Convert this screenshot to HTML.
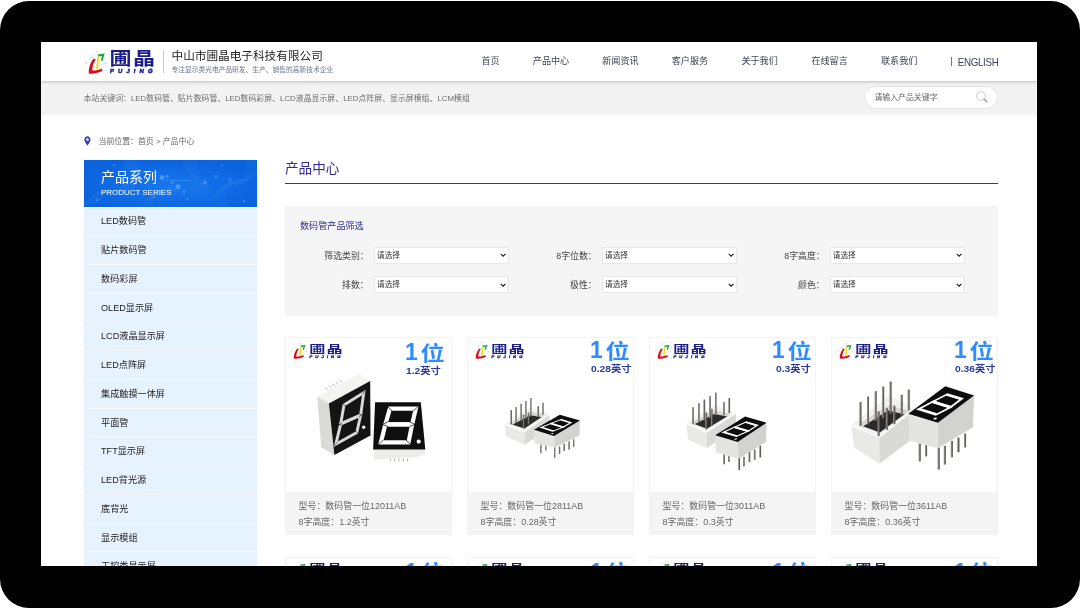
<!DOCTYPE html>
<html lang="zh-CN">
<head>
<meta charset="utf-8">
<title>产品中心 - 中山市圃晶电子科技有限公司</title>
<style>
*{box-sizing:border-box;margin:0;padding:0}
html,body{width:1080px;height:608px;overflow:hidden;background:#fff}
body{font-family:"Liberation Sans","Noto Sans CJK SC",sans-serif;position:relative;color:#333}
#frame{position:absolute;left:0;top:0.5px;width:1079.5px;height:607.5px;background:#000;border-radius:29px}
#screen{position:absolute;left:41px;top:42px;width:996px;height:524px;background:#fff;overflow:hidden;will-change:transform}
.abs{position:absolute;white-space:nowrap;line-height:1}
/* header (coordinates relative to #screen) */
#hdr{position:absolute;left:0;top:0;width:996px;height:38.5px;background:#fff;box-shadow:0 1px 3px rgba(0,0,0,.22);z-index:3}
#kw{position:absolute;left:0;top:38.5px;width:996px;height:34.5px;background:#f3f3f3}
.nav{position:absolute;top:14.4px;font-size:9.1px;color:#3d4256;line-height:10px;white-space:nowrap}
#search{position:absolute;left:822.8px;top:43.6px;width:134.6px;height:23.6px;border:1px solid #e4e4e4;border-radius:11.8px;background:#fff}
.logo{position:absolute;width:70px;height:27px;transform-origin:0 0}
.lg1{position:absolute;left:25px;top:1.4px;font-size:22px;font-weight:bold;color:#1b1f87;line-height:22px;white-space:nowrap;transform:scaleY(0.84);transform-origin:0 0;letter-spacing:1.6px}
.lg2{position:absolute;left:25.4px;top:19.2px;font-size:6px;font-weight:bold;color:#1b1f87;line-height:7px;white-space:nowrap;letter-spacing:4.05px;transform:skewX(-8deg);-webkit-text-stroke:0.5px #1b1f87}
.card .lg1{top:2.5px;transform:scaleY(0.77)}
.card .lg2{top:19.6px}
.card .logo svg{transform:scaleY(1.09);transform-origin:0 2.5px}
/* sidebar */
#sbh{position:absolute;left:43px;top:118.2px;width:173px;height:47.1px;border-bottom:0.9px solid #fff;box-sizing:content-box;z-index:2;background:#0c68dd;overflow:hidden}
.sbi{position:absolute;left:43px;width:173px;height:28.75px;background:#e6f2fe;border-bottom:1px solid #f3f9ff;font-size:9.15px;color:#222;line-height:28.4px;padding-left:17px;white-space:nowrap}
/* main */
#ttl{position:absolute;left:244px;top:119px;font-size:13.6px;color:#30299a;line-height:16px}
#ttlline{position:absolute;left:244px;top:141.1px;width:713px;height:1.4px;background:#3a31a4}
#filter{position:absolute;left:244px;top:163.6px;width:713px;height:110.2px;background:#f5f5f5}
.flab{position:absolute;margin-left:-5.3px;font-size:8.9px;color:#444;line-height:10px;white-space:nowrap;text-align:right;width:80px}
.sel{position:absolute;margin-top:-0.3px;width:135px;height:17.2px;background:#fff;border:1px solid #e8e8e8;font-size:7.6px;color:#333;line-height:15.4px;padding-left:1.8px;white-space:nowrap}
.sel svg{position:absolute;right:2.2px;top:5.4px}
/* cards */
.card{position:absolute;top:295px;width:167px;height:198px;background:#fff;border:1px solid #f3f3f3}
.card .info{position:absolute;left:0;top:154px;width:165px;height:43px;background:#f4f4f4;font-size:8.95px;color:#666;padding:7.2px 0 0 12.5px;line-height:15.5px;white-space:nowrap}
.card .big{position:absolute;top:0.5px;letter-spacing:1.6px;font-size:20.5px;font-weight:bold;color:#2e8cff;line-height:24px;white-space:nowrap;transform:scaleX(1.18);transform-origin:0 0}
.card .one{display:inline-block;font-size:23px;letter-spacing:0;margin-right:0.3px;position:relative;top:-0.4px;transform:scaleX(0.84);transform-origin:0 0}
.card .sm{position:absolute;top:25.6px;font-size:8.7px;font-weight:bold;color:#2b3b9e;line-height:11px;white-space:nowrap;transform:scaleX(1.185);transform-origin:0 0}
.card2{top:514.6px}
</style>
</head>
<body>
<div id="frame"></div>
<div id="screen">
  <div id="hdr">
    <!--HLOGO--><div class="logo" style="left:43.5px;top:6.5px;transform:scale(1.0000,1.0000)">
<svg class="abs" style="left:0;top:0" width="24" height="26" viewBox="0 0 24 26">
<path d="M1.2 14 L12.3 2.6 M9.5 17.8 L20.8 14.3 M5.5 9.5 L16 21" stroke="#b9cdf0" stroke-width="0.45" fill="none"/>
<circle cx="1.2" cy="14" r="0.8" fill="#b9cdf0"/><circle cx="12.3" cy="2.6" r="0.8" fill="#b9cdf0"/><circle cx="20.8" cy="14.3" r="0.8" fill="#b9cdf0"/><circle cx="6.8" cy="8.2" r="0.7" fill="#b9cdf0"/>
<path d="M8.6 9.6 C5.4 13.4 3.4 19.5 3.8 24.4 C8.2 25.4 13.4 24 17.6 21.8 L16.6 19.4 C13.2 21.2 9.8 21.9 7.3 21.4 C7.2 17.6 8.6 13.4 10.8 10.4 Z" fill="#d5101c"/>
<path d="M12.3 7.6 L14 7.8 L13.1 20.6 L11.3 20.2 Z" fill="#f0da00"/>
<path d="M12.8 5.4 L19.6 4.6 L17.6 12 L15.8 11.3 L17.2 6.9 L13.2 7.4 Z" fill="#17a03c"/>
</svg><div class="lg1">圃晶</div><div class="lg2">PUJING</div></div><!--/HLOGO-->
    <div class="abs" style="left:121.5px;top:8px;width:1px;height:23px;background:#c9c9c9"></div>
    <div class="abs" style="left:130.5px;top:6.6px;font-size:11.65px;color:#222;line-height:13px">中山市圃晶电子科技有限公司</div>
    <div class="abs" style="left:130.5px;top:24px;font-size:6.74px;color:#6d7490;line-height:8px">专注显示类光电产品研发、生产、销售的高新技术企业</div>
    <div class="nav" style="left:440.4px">首页</div>
    <div class="nav" style="left:491.8px">产品中心</div>
    <div class="nav" style="left:561.2px">新闻资讯</div>
    <div class="nav" style="left:630.7px">客户服务</div>
    <div class="nav" style="left:700.4px">关于我们</div>
    <div class="nav" style="left:770.4px">在线留言</div>
    <div class="nav" style="left:840px">联系我们</div>
    <div class="nav" style="left:909.3px">|&nbsp;&nbsp;<span style="font-size:9.8px;letter-spacing:-0.33px;display:inline-block;position:relative;top:1.5px;transform:scaleY(1.02)">ENGLISH</span></div>
  </div>
  <div id="kw">
    <div class="abs" style="left:42.6px;top:13px;font-size:7.9px;color:#6e6e6e;line-height:9px">本站关键词：LED数码管、贴片数码管、LED数码彩屏、LCD液晶显示屏、LED点阵屏、显示屏模组、LCM模组</div>
  </div>
  <div id="search">
    <div class="abs" style="left:9.6px;top:6px;font-size:7.9px;color:#686868;line-height:9px">请输入产品关键字</div>
    <svg class="abs" style="left:110px;top:3.6px" width="15" height="15" viewBox="0 0 15 15"><circle cx="6" cy="6" r="4.3" fill="none" stroke="#cdcdcd" stroke-width="1"/><path d="M9.3 9.3 L11.6 11.6" stroke="#b3b3b3" stroke-width="2.1" stroke-linecap="round"/></svg>
  </div>
  <!-- breadcrumb -->
  <svg class="abs" style="left:43.2px;top:94.3px" width="6.9" height="10" viewBox="0 0 8 11" preserveAspectRatio="none"><path d="M4 0.3C1.9 0.3 0.4 1.9 0.4 3.9 0.4 6.4 4 10.6 4 10.6S7.6 6.4 7.6 3.9C7.6 1.9 6.1 0.3 4 0.3Z" fill="#3b4aa6"/><circle cx="4" cy="3.8" r="1.4" fill="#fff"/></svg>
  <div class="abs" style="left:57.5px;top:95.4px;font-size:7.9px;color:#666;line-height:9px">当前位置：首页 &gt; 产品中心</div>

  <!-- sidebar -->
  <div id="sbh">
    <svg class="abs" style="left:0;top:0" width="173" height="47.2" viewBox="0 0 173 46" preserveAspectRatio="none"><defs><filter id="gl" x="-50%" y="-50%" width="200%" height="200%"><feGaussianBlur stdDeviation="0.7"/></filter><radialGradient id="sbg" cx="0.5" cy="0.55" r="0.6"><stop offset="0" stop-color="#1877ee"/><stop offset="1" stop-color="#0a62dc"/></radialGradient></defs><rect width="173" height="46" fill="url(#sbg)"/><g filter="url(#gl)"><polyline points="-2.0,46.0 12.0,32.0 32.0,32.0 42.0,22.0 42.0,-8.0" fill="none" stroke="#5aa2ff" stroke-opacity="0.22" stroke-width="0.7"/><polyline points="0.2,45.5 14.2,31.5 34.2,31.5 44.2,21.5 44.2,-8.5" fill="none" stroke="#5aa2ff" stroke-opacity="0.22" stroke-width="0.7"/><polyline points="2.4,45.0 16.4,31.0 36.4,31.0 46.4,21.0 46.4,-9.0" fill="none" stroke="#5aa2ff" stroke-opacity="0.22" stroke-width="0.7"/><polyline points="4.6,44.5 18.6,30.5 38.6,30.5 48.6,20.5 48.6,-9.5" fill="none" stroke="#5aa2ff" stroke-opacity="0.22" stroke-width="0.7"/><polyline points="6.8,44.0 20.8,30.0 40.8,30.0 50.8,20.0 50.8,-10.0" fill="none" stroke="#5aa2ff" stroke-opacity="0.22" stroke-width="0.7"/><polyline points="9.0,43.5 23.0,29.5 43.0,29.5 53.0,19.5 53.0,-10.5" fill="none" stroke="#5aa2ff" stroke-opacity="0.22" stroke-width="0.7"/><polyline points="11.2,43.0 25.2,29.0 45.2,29.0 55.2,19.0 55.2,-11.0" fill="none" stroke="#5aa2ff" stroke-opacity="0.22" stroke-width="0.7"/><polyline points="100.0,-2.0 100.0,8.0 112.0,20.0 112.0,30.0 98.0,44.0 98.0,64.0" fill="none" stroke="#5aa2ff" stroke-opacity="0.18" stroke-width="0.7"/><polyline points="102.4,-2.0 102.4,9.2 114.4,21.2 114.4,31.2 100.4,45.2 100.4,65.2" fill="none" stroke="#5aa2ff" stroke-opacity="0.18" stroke-width="0.7"/><polyline points="104.8,-2.0 104.8,10.4 116.8,22.4 116.8,32.4 102.8,46.4 102.8,66.4" fill="none" stroke="#5aa2ff" stroke-opacity="0.18" stroke-width="0.7"/><polyline points="107.2,-2.0 107.2,11.6 119.2,23.6 119.2,33.6 105.2,47.6 105.2,67.6" fill="none" stroke="#5aa2ff" stroke-opacity="0.18" stroke-width="0.7"/><polyline points="109.6,-2.0 109.6,12.8 121.6,24.8 121.6,34.8 107.6,48.8 107.6,68.8" fill="none" stroke="#5aa2ff" stroke-opacity="0.18" stroke-width="0.7"/><polyline points="112.0,-2.0 112.0,14.0 124.0,26.0 124.0,36.0 110.0,50.0 110.0,70.0" fill="none" stroke="#5aa2ff" stroke-opacity="0.18" stroke-width="0.7"/><polyline points="128.0,48.0 128.0,36.0 140.0,24.0 154.0,24.0 164.0,14.0 164.0,-6.0" fill="none" stroke="#5aa2ff" stroke-opacity="0.22" stroke-width="0.7"/><polyline points="130.4,48.0 130.4,35.0 142.4,23.0 156.4,23.0 166.4,13.0 166.4,-7.0" fill="none" stroke="#5aa2ff" stroke-opacity="0.22" stroke-width="0.7"/><polyline points="132.8,48.0 132.8,34.0 144.8,22.0 158.8,22.0 168.8,12.0 168.8,-8.0" fill="none" stroke="#5aa2ff" stroke-opacity="0.22" stroke-width="0.7"/><polyline points="135.2,48.0 135.2,33.0 147.2,21.0 161.2,21.0 171.2,11.0 171.2,-9.0" fill="none" stroke="#5aa2ff" stroke-opacity="0.22" stroke-width="0.7"/><polyline points="137.6,48.0 137.6,32.0 149.6,20.0 163.6,20.0 173.6,10.0 173.6,-10.0" fill="none" stroke="#5aa2ff" stroke-opacity="0.22" stroke-width="0.7"/><polyline points="140.0,48.0 140.0,31.0 152.0,19.0 166.0,19.0 176.0,9.0 176.0,-11.0" fill="none" stroke="#5aa2ff" stroke-opacity="0.22" stroke-width="0.7"/><polyline points="40.0,-2.0 40.0,4.0 48.0,12.0 66.0,12.0 74.0,20.0 104.0,20.0" fill="none" stroke="#5aa2ff" stroke-opacity="0.18" stroke-width="0.7"/><polyline points="42.4,-2.0 42.4,4.0 50.4,12.0 68.4,12.0 76.4,20.0 106.4,20.0" fill="none" stroke="#5aa2ff" stroke-opacity="0.18" stroke-width="0.7"/><polyline points="44.8,-2.0 44.8,4.0 52.8,12.0 70.8,12.0 78.8,20.0 108.8,20.0" fill="none" stroke="#5aa2ff" stroke-opacity="0.18" stroke-width="0.7"/><polyline points="47.2,-2.0 47.2,4.0 55.2,12.0 73.2,12.0 81.2,20.0 111.2,20.0" fill="none" stroke="#5aa2ff" stroke-opacity="0.18" stroke-width="0.7"/><polyline points="49.6,-2.0 49.6,4.0 57.6,12.0 75.6,12.0 83.6,20.0 113.6,20.0" fill="none" stroke="#5aa2ff" stroke-opacity="0.18" stroke-width="0.7"/><polyline points="60.0,48.0 60.0,42.0 70.0,32.0 92.0,32.0" fill="none" stroke="#5aa2ff" stroke-opacity="0.2" stroke-width="0.7"/><polyline points="62.2,48.0 62.2,41.0 72.2,31.0 94.2,31.0" fill="none" stroke="#5aa2ff" stroke-opacity="0.2" stroke-width="0.7"/><polyline points="64.4,48.0 64.4,40.0 74.4,30.0 96.4,30.0" fill="none" stroke="#5aa2ff" stroke-opacity="0.2" stroke-width="0.7"/><polyline points="66.6,48.0 66.6,39.0 76.6,29.0 98.6,29.0" fill="none" stroke="#5aa2ff" stroke-opacity="0.2" stroke-width="0.7"/><polyline points="68.8,48.0 68.8,38.0 78.8,28.0 100.8,28.0" fill="none" stroke="#5aa2ff" stroke-opacity="0.2" stroke-width="0.7"/></g><g filter="url(#gl)"><circle cx="78" cy="17" r="2.2" fill="#7fbaff" fill-opacity="0.55"/><circle cx="83" cy="16" r="1.6" fill="#7fbaff" fill-opacity="0.45"/><circle cx="94" cy="26" r="2.4" fill="#7fbaff" fill-opacity="0.5"/><circle cx="100" cy="31" r="1.6" fill="#7fbaff" fill-opacity="0.4"/><circle cx="88" cy="22" r="1.3" fill="#7fbaff" fill-opacity="0.4"/><circle cx="121" cy="22" r="2" fill="#7fbaff" fill-opacity="0.4"/><circle cx="132" cy="16" r="1.5" fill="#7fbaff" fill-opacity="0.35"/><circle cx="146" cy="19" r="1.5" fill="#7fbaff" fill-opacity="0.35"/><circle cx="30" cy="5" r="1.3" fill="#7fbaff" fill-opacity="0.3"/><circle cx="50" cy="24" r="1.4" fill="#7fbaff" fill-opacity="0.3"/><circle cx="13" cy="39" r="1.5" fill="#7fbaff" fill-opacity="0.3"/><circle cx="160" cy="40" r="1.4" fill="#7fbaff" fill-opacity="0.3"/><circle cx="138" cy="5" r="1.2" fill="#7fbaff" fill-opacity="0.3"/><circle cx="70" cy="36" r="1.2" fill="#7fbaff" fill-opacity="0.3"/><circle cx="103" cy="38" r="1.2" fill="#7fbaff" fill-opacity="0.3"/></g></svg>
    <div class="abs" style="left:17px;top:9.5px;font-size:14px;color:#fff;line-height:15px">产品系列</div>
    <div class="abs" style="left:17px;top:28.3px;font-size:7.95px;color:#fff;line-height:9px">PRODUCT SERIES</div>
  </div>
  <div class="abs" style="left:43px;top:164px;width:173px;height:362px;background:#e6f2fe"></div>
  <div class="sbi" style="top:165.40px">LED数码管</div>
  <div class="sbi" style="top:194.15px">贴片数码管</div>
  <div class="sbi" style="top:222.90px">数码彩屏</div>
  <div class="sbi" style="top:251.65px">OLED显示屏</div>
  <div class="sbi" style="top:280.40px">LCD液晶显示屏</div>
  <div class="sbi" style="top:309.15px">LED点阵屏</div>
  <div class="sbi" style="top:337.90px">集成触摸一体屏</div>
  <div class="sbi" style="top:366.65px">平面管</div>
  <div class="sbi" style="top:395.40px">TFT显示屏</div>
  <div class="sbi" style="top:424.15px">LED背光源</div>
  <div class="sbi" style="top:452.90px">底背光</div>
  <div class="sbi" style="top:481.65px">显示模组</div>
  <div class="sbi" style="top:510.40px">工控类显示屏</div>

  <!-- main -->
  <div id="ttl">产品中心</div>
  <div id="ttlline"></div>
  <div id="filter">
    <div class="abs" style="left:15px;top:15px;font-size:9.1px;color:#2f2e8b;line-height:10px">数码管产品筛选</div>
    <div class="flab" style="left:9px;top:45.2px">筛选类别：</div>
    <div class="sel" style="left:89.3px;top:41.7px">请选择<svg width="6.2" height="4.4" viewBox="0 0 7 5"><path d="M0.8 0.9 L3.5 3.7 L6.2 0.9" fill="none" stroke="#222" stroke-width="1.3"/></svg></div>
    <div class="flab" style="left:237px;top:45.2px">8字位数：</div>
    <div class="sel" style="left:317.3px;top:41.7px">请选择<svg width="6.2" height="4.4" viewBox="0 0 7 5"><path d="M0.8 0.9 L3.5 3.7 L6.2 0.9" fill="none" stroke="#222" stroke-width="1.3"/></svg></div>
    <div class="flab" style="left:465px;top:45.2px">8字高度：</div>
    <div class="sel" style="left:545px;top:41.7px">请选择<svg width="6.2" height="4.4" viewBox="0 0 7 5"><path d="M0.8 0.9 L3.5 3.7 L6.2 0.9" fill="none" stroke="#222" stroke-width="1.3"/></svg></div>
    <div class="flab" style="left:9px;top:74.5px">排数：</div>
    <div class="sel" style="left:89.3px;top:71px">请选择<svg width="6.2" height="4.4" viewBox="0 0 7 5"><path d="M0.8 0.9 L3.5 3.7 L6.2 0.9" fill="none" stroke="#222" stroke-width="1.3"/></svg></div>
    <div class="flab" style="left:237px;top:74.5px">极性：</div>
    <div class="sel" style="left:317.3px;top:71px">请选择<svg width="6.2" height="4.4" viewBox="0 0 7 5"><path d="M0.8 0.9 L3.5 3.7 L6.2 0.9" fill="none" stroke="#222" stroke-width="1.3"/></svg></div>
    <div class="flab" style="left:465px;top:74.5px">颜色：</div>
    <div class="sel" style="left:545px;top:71px">请选择<svg width="6.2" height="4.4" viewBox="0 0 7 5"><path d="M0.8 0.9 L3.5 3.7 L6.2 0.9" fill="none" stroke="#222" stroke-width="1.3"/></svg></div>
  </div>
<!--CARDS-->
  <div class="card" style="left:244px">
    <div class="logo" style="left:5.1px;top:3.7px;transform:scale(0.7329,0.6269)">
<svg class="abs" style="left:0;top:0" width="24" height="26" viewBox="0 0 24 26">
<path d="M1.2 14 L12.3 2.6 M9.5 17.8 L20.8 14.3 M5.5 9.5 L16 21" stroke="#b9cdf0" stroke-width="0.45" fill="none"/>
<circle cx="1.2" cy="14" r="0.8" fill="#b9cdf0"/><circle cx="12.3" cy="2.6" r="0.8" fill="#b9cdf0"/><circle cx="20.8" cy="14.3" r="0.8" fill="#b9cdf0"/><circle cx="6.8" cy="8.2" r="0.7" fill="#b9cdf0"/>
<path d="M8.6 9.6 C5.4 13.4 3.4 19.5 3.8 24.4 C8.2 25.4 13.4 24 17.6 21.8 L16.6 19.4 C13.2 21.2 9.8 21.9 7.3 21.4 C7.2 17.6 8.6 13.4 10.8 10.4 Z" fill="#d5101c"/>
<path d="M12.3 7.6 L14 7.8 L13.1 20.6 L11.3 20.2 Z" fill="#f0da00"/>
<path d="M12.8 5.4 L19.6 4.6 L17.6 12 L15.8 11.3 L17.2 6.9 L13.2 7.4 Z" fill="#17a03c"/>
</svg><div class="lg1">圃晶</div><div class="lg2">PUJING</div></div>
    <div class="big" style="left:119px;margin-top:2.2px"><span class="one">1</span>位</div><div class="sm" style="left:120px;margin-top:2.2px">1.2英寸</div>
    <svg class="abs" style="left:0;top:0" width="165" height="154" viewBox="0 0 165 154"><polyline points="38.8,49.5 41.7,51.7" stroke="#b0b0b0" stroke-width="0.8" fill="none"/><polyline points="42.6,47.7 45.5,49.9" stroke="#b0b0b0" stroke-width="0.8" fill="none"/><polyline points="46.2,45.9 49.1,48.1" stroke="#b0b0b0" stroke-width="0.8" fill="none"/><polyline points="49.6,43.9 52.5,46.1" stroke="#b0b0b0" stroke-width="0.8" fill="none"/><polyline points="53.3,41.9 56.1,44.1" stroke="#b0b0b0" stroke-width="0.8" fill="none"/><polygon points="31.2,58.8 72.8,36.0 84.2,42.9 42.9,65.6" fill="#f3f3f1"/><polygon points="31.2,58.8 42.9,65.6 48.4,117.0 35.3,109.4" fill="#dadad8"/><polygon points="42.9,65.6 84.2,42.9 84.5,97.5 48.4,117.0" fill="#141414"/><polygon points="58.0,66.9 77.8,54.6 74.6,77.2 54.7,85.9" fill="none" stroke="#d9d9d9" stroke-width="2.9" stroke-linejoin="miter"/><polygon points="54.7,85.9 74.6,77.2 70.8,94.6 49.8,106.2" fill="none" stroke="#d9d9d9" stroke-width="2.9"/><polyline points="56.7,65.6 59.4,68.0" stroke="#141414" stroke-width="0.6" fill="none"/><polyline points="79.3,52.6 76.4,56.4" stroke="#141414" stroke-width="0.6" fill="none"/><polyline points="53.1,86.8 56.1,84.5" stroke="#141414" stroke-width="0.6" fill="none"/><polyline points="53.1,86.8 55.8,86.8" stroke="#141414" stroke-width="0.6" fill="none"/><polyline points="76.0,76.5 73.1,76.9" stroke="#141414" stroke-width="0.6" fill="none"/><polyline points="76.0,76.5 73.1,79.0" stroke="#141414" stroke-width="0.6" fill="none"/><polyline points="48.2,107.8 51.3,104.2" stroke="#141414" stroke-width="0.6" fill="none"/><polyline points="72.2,95.3 69.3,93.1" stroke="#141414" stroke-width="0.6" fill="none"/><circle cx="77.7" cy="89.2" r="1.7" fill="#f4f4f4"/><polyline points="104.4,120.6 104.4,123.5" stroke="#999" stroke-width="0.8" fill="none"/><polyline points="108.6,120.6 108.6,123.5" stroke="#999" stroke-width="0.8" fill="none"/><polyline points="112.9,120.6 112.9,123.5" stroke="#999" stroke-width="0.8" fill="none"/><polyline points="117.3,120.6 117.3,123.5" stroke="#999" stroke-width="0.8" fill="none"/><polyline points="121.6,120.6 121.6,123.5" stroke="#999" stroke-width="0.8" fill="none"/><polygon points="87.3,111.2 139.2,111.2 139.2,116.3 129.8,119.2 88.2,121.5" fill="#ececea"/><polygon points="89.1,64.2 134.8,64.2 139.3,111.6 87.1,111.6" fill="#0f0f0f"/><polygon points="103.9,70.7 129.8,70.7 126.1,86.3 99.4,86.3" fill="none" stroke="#fff" stroke-width="4.2"/><polygon points="99.4,86.3 126.1,86.3 122.5,104.4 94.9,104.4" fill="none" stroke="#fff" stroke-width="4.2"/><polyline points="101.2,68.0 106.4,73.2" stroke="#0f0f0f" stroke-width="0.75" fill="none"/><polyline points="132.5,68.0 127.2,73.2" stroke="#0f0f0f" stroke-width="0.75" fill="none"/><polyline points="96.5,86.3 101.9,83.9" stroke="#0f0f0f" stroke-width="0.75" fill="none"/><polyline points="96.5,86.3 101.9,88.6" stroke="#0f0f0f" stroke-width="0.75" fill="none"/><polyline points="129.0,86.3 123.6,83.9" stroke="#0f0f0f" stroke-width="0.75" fill="none"/><polyline points="129.0,86.3 123.6,88.6" stroke="#0f0f0f" stroke-width="0.75" fill="none"/><polyline points="92.1,107.1 97.4,101.8" stroke="#0f0f0f" stroke-width="0.75" fill="none"/><polyline points="125.2,107.1 120.0,101.8" stroke="#0f0f0f" stroke-width="0.75" fill="none"/><circle cx="132.7" cy="103.6" r="2.1" fill="#fff"/></svg>
    <div class="info">型号：数码管一位12011AB<br>8字高度：1.2英寸</div>
  </div>
  <div class="card" style="left:426px">
    <div class="logo" style="left:5.1px;top:3.7px;transform:scale(0.7329,0.6269)">
<svg class="abs" style="left:0;top:0" width="24" height="26" viewBox="0 0 24 26">
<path d="M1.2 14 L12.3 2.6 M9.5 17.8 L20.8 14.3 M5.5 9.5 L16 21" stroke="#b9cdf0" stroke-width="0.45" fill="none"/>
<circle cx="1.2" cy="14" r="0.8" fill="#b9cdf0"/><circle cx="12.3" cy="2.6" r="0.8" fill="#b9cdf0"/><circle cx="20.8" cy="14.3" r="0.8" fill="#b9cdf0"/><circle cx="6.8" cy="8.2" r="0.7" fill="#b9cdf0"/>
<path d="M8.6 9.6 C5.4 13.4 3.4 19.5 3.8 24.4 C8.2 25.4 13.4 24 17.6 21.8 L16.6 19.4 C13.2 21.2 9.8 21.9 7.3 21.4 C7.2 17.6 8.6 13.4 10.8 10.4 Z" fill="#d5101c"/>
<path d="M12.3 7.6 L14 7.8 L13.1 20.6 L11.3 20.2 Z" fill="#f0da00"/>
<path d="M12.8 5.4 L19.6 4.6 L17.6 12 L15.8 11.3 L17.2 6.9 L13.2 7.4 Z" fill="#17a03c"/>
</svg><div class="lg1">圃晶</div><div class="lg2">PUJING</div></div>
    <div class="big" style="left:121.8px;margin-top:0px"><span class="one">1</span>位</div><div class="sm" style="left:122.8px;margin-top:0px">0.28英寸</div>
    <svg class="abs" style="left:0;top:0" width="165" height="154" viewBox="0 0 165 154"><polygon points="36.6,86.0 62.2,69.3 81.7,75.9 56.2,93.7" fill="#f1f1ef"/><clipPath id="c500"><polygon points="41.0,85.4 62.2,74.1 77.5,76.6 56.4,90.6"/></clipPath><polygon points="41.0,85.4 62.2,74.1 77.5,76.6 56.4,90.6" fill="#d6d6d4"/><polygon points="41.0,88.5 62.2,77.2 77.5,79.7 56.4,93.7" fill="#2b2b2b" clip-path="url(#c500)"/><rect x="42.6" y="72.1" width="1.35" height="14.4" rx="0.45" fill="#625f5b"/><rect x="42.6" y="72.1" width="0.41" height="14.4" fill="#a9a7a3"/><rect x="47.4" y="69.0" width="1.35" height="16.3" rx="0.45" fill="#625f5b"/><rect x="47.4" y="69.0" width="0.41" height="16.3" fill="#a9a7a3"/><rect x="52.4" y="65.8" width="1.35" height="17.3" rx="0.45" fill="#625f5b"/><rect x="52.4" y="65.8" width="0.41" height="17.3" fill="#a9a7a3"/><rect x="57.2" y="62.9" width="1.35" height="17.8" rx="0.45" fill="#625f5b"/><rect x="57.2" y="62.9" width="0.41" height="17.8" fill="#a9a7a3"/><rect x="62.2" y="60.1" width="1.35" height="18.4" rx="0.45" fill="#625f5b"/><rect x="62.2" y="60.1" width="0.41" height="18.4" fill="#a9a7a3"/><rect x="69.6" y="68.1" width="1.35" height="10.9" rx="0.45" fill="#625f5b"/><rect x="69.6" y="68.1" width="0.41" height="10.9" fill="#a9a7a3"/><rect x="74.3" y="64.7" width="1.35" height="12.1" rx="0.45" fill="#625f5b"/><rect x="74.3" y="64.7" width="0.41" height="12.1" fill="#a9a7a3"/><polygon points="36.6,86.0 56.2,93.7 56.7,106.7 38.3,98.6" fill="#e9e9e7"/><polygon points="56.2,93.7 81.7,75.9 81.5,90.0 56.7,106.7" fill="#d9d9d7"/><polyline points="36.6,86.0 56.2,93.7 81.7,75.9" fill="none" stroke="#fbfbfb" stroke-width="1.6"/><rect x="54.9" y="76.7" width="1.35" height="13.8" rx="0.45" fill="#625f5b"/><rect x="54.9" y="76.7" width="0.41" height="13.8" fill="#a9a7a3"/><rect x="59.9" y="74.4" width="1.35" height="12.1" rx="0.45" fill="#625f5b"/><rect x="59.9" y="74.4" width="0.41" height="12.1" fill="#a9a7a3"/><rect x="72.2" y="106.1" width="1.35" height="9.2" rx="0.45" fill="#5e5b57"/><rect x="72.2" y="106.1" width="0.41" height="9.2" fill="#a9a7a3"/><rect x="77.1" y="107.2" width="1.35" height="5.2" rx="0.45" fill="#5e5b57"/><rect x="77.1" y="107.2" width="0.41" height="5.2" fill="#a9a7a3"/><rect x="86.0" y="109.0" width="1.35" height="10.9" rx="0.45" fill="#5e5b57"/><rect x="86.0" y="109.0" width="0.41" height="10.9" fill="#a9a7a3"/><rect x="90.9" y="108.4" width="1.35" height="7.5" rx="0.45" fill="#5e5b57"/><rect x="90.9" y="108.4" width="0.41" height="7.5" fill="#a9a7a3"/><rect x="95.5" y="105.5" width="1.35" height="7.5" rx="0.45" fill="#5e5b57"/><rect x="95.5" y="105.5" width="0.41" height="7.5" fill="#a9a7a3"/><rect x="100.4" y="103.2" width="1.35" height="8.6" rx="0.45" fill="#5e5b57"/><rect x="100.4" y="103.2" width="0.41" height="8.6" fill="#a9a7a3"/><rect x="105.0" y="100.9" width="1.35" height="8.1" rx="0.45" fill="#5e5b57"/><rect x="105.0" y="100.9" width="0.41" height="8.1" fill="#a9a7a3"/><polygon points="66.0,91.7 86.1,98.0 87.0,109.5 66.5,105.5" fill="#e4e4e2"/><polygon points="86.1,98.0 112.0,82.5 111.4,97.5 87.0,109.5" fill="#d2d2d0"/><polygon points="66.0,91.7 91.8,76.7 112.0,82.5 86.1,98.0" fill="#0d0d0d"/><g transform="matrix(20.14 6.33 -25.89 14.96 91.85 76.74)" fill="none" stroke="#fff" stroke-width="0.072"><polygon points="0.3,0.2 0.8,0.2 0.8,0.5 0.2,0.5"/><polygon points="0.2,0.5 0.8,0.5 0.7,0.8 0.1,0.8"/><ellipse cx="0.8" cy="0.915" rx="0.042" ry="0.033600000000000005" fill="#fff" stroke="none"/></g></svg>
    <div class="info">型号：数码管一位2811AB<br>8字高度：0.28英寸</div>
  </div>
  <div class="card" style="left:608px">
    <div class="logo" style="left:5.1px;top:3.7px;transform:scale(0.7329,0.6269)">
<svg class="abs" style="left:0;top:0" width="24" height="26" viewBox="0 0 24 26">
<path d="M1.2 14 L12.3 2.6 M9.5 17.8 L20.8 14.3 M5.5 9.5 L16 21" stroke="#b9cdf0" stroke-width="0.45" fill="none"/>
<circle cx="1.2" cy="14" r="0.8" fill="#b9cdf0"/><circle cx="12.3" cy="2.6" r="0.8" fill="#b9cdf0"/><circle cx="20.8" cy="14.3" r="0.8" fill="#b9cdf0"/><circle cx="6.8" cy="8.2" r="0.7" fill="#b9cdf0"/>
<path d="M8.6 9.6 C5.4 13.4 3.4 19.5 3.8 24.4 C8.2 25.4 13.4 24 17.6 21.8 L16.6 19.4 C13.2 21.2 9.8 21.9 7.3 21.4 C7.2 17.6 8.6 13.4 10.8 10.4 Z" fill="#d5101c"/>
<path d="M12.3 7.6 L14 7.8 L13.1 20.6 L11.3 20.2 Z" fill="#f0da00"/>
<path d="M12.8 5.4 L19.6 4.6 L17.6 12 L15.8 11.3 L17.2 6.9 L13.2 7.4 Z" fill="#17a03c"/>
</svg><div class="lg1">圃晶</div><div class="lg2">PUJING</div></div>
    <div class="big" style="left:121.5px;margin-top:0px"><span class="one">1</span>位</div><div class="sm" style="left:126px;margin-top:0px">0.3英寸</div>
    <svg class="abs" style="left:0;top:0" width="165" height="154" viewBox="0 0 165 154"><polygon points="36.2,85.2 64.8,67.0 85.9,74.8 56.6,94.1" fill="#f1f1ef"/><clipPath id="c680"><polygon points="41.1,84.7 64.3,72.5 81.1,75.9 56.9,90.7"/></clipPath><polygon points="41.1,84.7 64.3,72.5 81.1,75.9 56.9,90.7" fill="#d6d6d4"/><polygon points="41.1,88.1 64.3,75.9 81.1,79.3 56.9,94.1" fill="#2b2b2b" clip-path="url(#c680)"/><rect x="42.2" y="69.2" width="1.6" height="17.0" rx="0.53" fill="#625f5b"/><rect x="42.2" y="69.2" width="0.48" height="17.0" fill="#a9a7a3"/><rect x="48.1" y="65.1" width="1.6" height="19.7" rx="0.53" fill="#625f5b"/><rect x="48.1" y="65.1" width="0.48" height="19.7" fill="#a9a7a3"/><rect x="53.6" y="61.4" width="1.6" height="21.2" rx="0.53" fill="#625f5b"/><rect x="53.6" y="61.4" width="0.48" height="21.2" fill="#a9a7a3"/><rect x="59.2" y="58.1" width="1.6" height="22.2" rx="0.53" fill="#625f5b"/><rect x="59.2" y="58.1" width="0.48" height="22.2" fill="#a9a7a3"/><rect x="65.0" y="54.4" width="1.6" height="22.9" rx="0.53" fill="#625f5b"/><rect x="65.0" y="54.4" width="0.48" height="22.9" fill="#a9a7a3"/><rect x="73.1" y="64.0" width="1.6" height="13.3" rx="0.53" fill="#625f5b"/><rect x="73.1" y="64.0" width="0.48" height="13.3" fill="#a9a7a3"/><rect x="78.5" y="60.0" width="1.6" height="15.1" rx="0.53" fill="#625f5b"/><rect x="78.5" y="60.0" width="0.48" height="15.1" fill="#a9a7a3"/><polygon points="36.2,85.2 56.6,94.1 56.9,109.9 38.1,101.7" fill="#e9e9e7"/><polygon points="56.6,94.1 85.9,74.8 85.9,91.4 56.9,109.9" fill="#d9d9d7"/><polyline points="36.2,85.2 56.6,94.1 85.9,74.8" fill="none" stroke="#fbfbfb" stroke-width="1.6"/><rect x="55.5" y="74.4" width="1.6" height="17.0" rx="0.53" fill="#625f5b"/><rect x="55.5" y="74.4" width="0.48" height="17.0" fill="#a9a7a3"/><rect x="61.0" y="70.7" width="1.6" height="17.0" rx="0.53" fill="#625f5b"/><rect x="61.0" y="70.7" width="0.48" height="17.0" fill="#a9a7a3"/><rect x="73.3" y="115.1" width="1.6" height="11.1" rx="0.53" fill="#5e5b57"/><rect x="73.3" y="115.1" width="0.48" height="11.1" fill="#a9a7a3"/><rect x="78.0" y="116.5" width="1.6" height="7.4" rx="0.53" fill="#5e5b57"/><rect x="78.0" y="116.5" width="0.48" height="7.4" fill="#a9a7a3"/><rect x="88.4" y="119.5" width="1.6" height="12.6" rx="0.53" fill="#5e5b57"/><rect x="88.4" y="119.5" width="0.48" height="12.6" fill="#a9a7a3"/><rect x="93.1" y="118.8" width="1.6" height="9.6" rx="0.53" fill="#5e5b57"/><rect x="93.1" y="118.8" width="0.48" height="9.6" fill="#a9a7a3"/><rect x="98.7" y="113.6" width="1.6" height="10.4" rx="0.53" fill="#5e5b57"/><rect x="98.7" y="113.6" width="0.48" height="10.4" fill="#a9a7a3"/><rect x="103.9" y="111.4" width="1.6" height="10.4" rx="0.53" fill="#5e5b57"/><rect x="103.9" y="111.4" width="0.48" height="10.4" fill="#a9a7a3"/><rect x="109.5" y="107.7" width="1.6" height="11.8" rx="0.53" fill="#5e5b57"/><rect x="109.5" y="107.7" width="0.48" height="11.8" fill="#a9a7a3"/><polygon points="65.2,97.3 87.7,104.0 88.4,121.0 65.8,114.3" fill="#e4e4e2"/><polygon points="87.7,104.0 116.6,84.7 116.1,104.0 88.4,121.0" fill="#d2d2d0"/><polygon points="65.2,97.3 95.1,78.4 116.6,84.7 87.7,104.0" fill="#0d0d0d"/><g transform="matrix(22.49 6.66 -29.89 18.94 95.11 78.37)" fill="none" stroke="#fff" stroke-width="0.072"><polygon points="0.3,0.2 0.8,0.2 0.8,0.5 0.2,0.5"/><polygon points="0.2,0.5 0.8,0.5 0.7,0.8 0.1,0.8"/><ellipse cx="0.8" cy="0.915" rx="0.042" ry="0.033600000000000005" fill="#fff" stroke="none"/></g></svg>
    <div class="info">型号：数码管一位3011AB<br>8字高度：0.3英寸</div>
  </div>
  <div class="card" style="left:790px">
    <div class="logo" style="left:5.1px;top:3.7px;transform:scale(0.7329,0.6269)">
<svg class="abs" style="left:0;top:0" width="24" height="26" viewBox="0 0 24 26">
<path d="M1.2 14 L12.3 2.6 M9.5 17.8 L20.8 14.3 M5.5 9.5 L16 21" stroke="#b9cdf0" stroke-width="0.45" fill="none"/>
<circle cx="1.2" cy="14" r="0.8" fill="#b9cdf0"/><circle cx="12.3" cy="2.6" r="0.8" fill="#b9cdf0"/><circle cx="20.8" cy="14.3" r="0.8" fill="#b9cdf0"/><circle cx="6.8" cy="8.2" r="0.7" fill="#b9cdf0"/>
<path d="M8.6 9.6 C5.4 13.4 3.4 19.5 3.8 24.4 C8.2 25.4 13.4 24 17.6 21.8 L16.6 19.4 C13.2 21.2 9.8 21.9 7.3 21.4 C7.2 17.6 8.6 13.4 10.8 10.4 Z" fill="#d5101c"/>
<path d="M12.3 7.6 L14 7.8 L13.1 20.6 L11.3 20.2 Z" fill="#f0da00"/>
<path d="M12.8 5.4 L19.6 4.6 L17.6 12 L15.8 11.3 L17.2 6.9 L13.2 7.4 Z" fill="#17a03c"/>
</svg><div class="lg1">圃晶</div><div class="lg2">PUJING</div></div>
    <div class="big" style="left:122px;margin-top:0px"><span class="one">1</span>位</div><div class="sm" style="left:122.5px;margin-top:0px">0.36英寸</div>
    <svg class="abs" style="left:0;top:0" width="165" height="154" viewBox="0 0 165 154"><polygon points="19.3,87.2 56.6,57.6 82.9,70.7 47.2,99.2" fill="#f1f1ef"/><clipPath id="c845"><polygon points="26.2,86.4 56.1,67.4 77.5,72.4 47.9,94.6"/></clipPath><polygon points="26.2,86.4 56.1,67.4 77.5,72.4 47.9,94.6" fill="#d6d6d4"/><polygon points="26.2,91.4 56.1,72.5 77.5,77.5 47.9,99.7" fill="#2b2b2b" clip-path="url(#c845)"/><rect x="27.6" y="64.1" width="2.0" height="23.9" rx="0.67" fill="#625f5b"/><rect x="27.6" y="64.1" width="0.60" height="23.9" fill="#a9a7a3"/><rect x="35.0" y="58.4" width="2.0" height="28.0" rx="0.67" fill="#625f5b"/><rect x="35.0" y="58.4" width="0.60" height="28.0" fill="#a9a7a3"/><rect x="42.8" y="53.1" width="2.0" height="29.9" rx="0.67" fill="#625f5b"/><rect x="42.8" y="53.1" width="0.60" height="29.9" fill="#a9a7a3"/><rect x="50.2" y="48.5" width="2.0" height="31.3" rx="0.67" fill="#625f5b"/><rect x="50.2" y="48.5" width="0.60" height="31.3" fill="#a9a7a3"/><rect x="57.7" y="43.6" width="2.0" height="32.1" rx="0.67" fill="#625f5b"/><rect x="57.7" y="43.6" width="0.60" height="32.1" fill="#a9a7a3"/><rect x="68.8" y="56.7" width="2.0" height="20.6" rx="0.67" fill="#625f5b"/><rect x="68.8" y="56.7" width="0.60" height="20.6" fill="#a9a7a3"/><rect x="75.8" y="51.5" width="2.0" height="20.9" rx="0.67" fill="#625f5b"/><rect x="75.8" y="51.5" width="0.60" height="20.9" fill="#a9a7a3"/><polygon points="19.3,87.2 47.2,99.2 47.5,125.8 22.0,109.4" fill="#e9e9e7"/><polygon points="47.2,99.2 82.9,70.7 82.1,99.5 47.5,125.8" fill="#d9d9d7"/><polyline points="19.3,87.2 47.2,99.2 82.9,70.7" fill="none" stroke="#fbfbfb" stroke-width="1.6"/><rect x="45.7" y="73.2" width="2.0" height="25.0" rx="0.67" fill="#625f5b"/><rect x="45.7" y="73.2" width="0.60" height="25.0" fill="#a9a7a3"/><rect x="53.9" y="69.9" width="2.0" height="22.2" rx="0.67" fill="#625f5b"/><rect x="53.9" y="69.9" width="0.60" height="22.2" fill="#a9a7a3"/><rect x="61.4" y="67.4" width="2.0" height="18.9" rx="0.67" fill="#625f5b"/><rect x="61.4" y="67.4" width="0.60" height="18.9" fill="#a9a7a3"/><rect x="86.8" y="105.3" width="2.0" height="18.1" rx="0.67" fill="#5e5b57"/><rect x="86.8" y="105.3" width="0.60" height="18.1" fill="#a9a7a3"/><rect x="93.1" y="106.9" width="2.0" height="11.5" rx="0.67" fill="#5e5b57"/><rect x="93.1" y="106.9" width="0.60" height="11.5" fill="#a9a7a3"/><rect x="105.8" y="109.4" width="2.0" height="22.2" rx="0.67" fill="#5e5b57"/><rect x="105.8" y="109.4" width="0.60" height="22.2" fill="#a9a7a3"/><rect x="111.9" y="107.7" width="2.0" height="18.9" rx="0.67" fill="#5e5b57"/><rect x="111.9" y="107.7" width="0.60" height="18.9" fill="#a9a7a3"/><rect x="118.9" y="102.8" width="2.0" height="16.5" rx="0.67" fill="#5e5b57"/><rect x="118.9" y="102.8" width="0.60" height="16.5" fill="#a9a7a3"/><rect x="125.5" y="99.5" width="2.0" height="14.8" rx="0.67" fill="#5e5b57"/><rect x="125.5" y="99.5" width="0.60" height="14.8" fill="#a9a7a3"/><rect x="132.1" y="95.4" width="2.0" height="14.0" rx="0.67" fill="#5e5b57"/><rect x="132.1" y="95.4" width="0.60" height="14.0" fill="#a9a7a3"/><polygon points="76.3,75.7 105.9,84.7 105.9,110.2 77.2,102.8" fill="#e4e4e2"/><polygon points="105.9,84.7 142.1,57.6 141.0,89.3 105.9,110.2" fill="#d2d2d0"/><polygon points="76.3,75.7 113.3,48.2 142.1,57.6 105.9,84.7" fill="#0d0d0d"/><g transform="matrix(29.61 9.05 -37.01 27.47 113.35 48.19)" fill="none" stroke="#fff" stroke-width="0.072"><polygon points="0.3,0.2 0.8,0.2 0.8,0.5 0.2,0.5"/><polygon points="0.2,0.5 0.8,0.5 0.7,0.8 0.1,0.8"/><ellipse cx="0.8" cy="0.915" rx="0.042" ry="0.033600000000000005" fill="#fff" stroke="none"/></g></svg>
    <div class="info">型号：数码管一位3611AB<br>8字高度：0.36英寸</div>
  </div>
  <div class="card card2" style="left:244px">
    <div class="logo" style="left:5.1px;top:3.7px;transform:scale(0.7329,0.6269)">
<svg class="abs" style="left:0;top:0" width="24" height="26" viewBox="0 0 24 26">
<path d="M1.2 14 L12.3 2.6 M9.5 17.8 L20.8 14.3 M5.5 9.5 L16 21" stroke="#b9cdf0" stroke-width="0.45" fill="none"/>
<circle cx="1.2" cy="14" r="0.8" fill="#b9cdf0"/><circle cx="12.3" cy="2.6" r="0.8" fill="#b9cdf0"/><circle cx="20.8" cy="14.3" r="0.8" fill="#b9cdf0"/><circle cx="6.8" cy="8.2" r="0.7" fill="#b9cdf0"/>
<path d="M8.6 9.6 C5.4 13.4 3.4 19.5 3.8 24.4 C8.2 25.4 13.4 24 17.6 21.8 L16.6 19.4 C13.2 21.2 9.8 21.9 7.3 21.4 C7.2 17.6 8.6 13.4 10.8 10.4 Z" fill="#d5101c"/>
<path d="M12.3 7.6 L14 7.8 L13.1 20.6 L11.3 20.2 Z" fill="#f0da00"/>
<path d="M12.8 5.4 L19.6 4.6 L17.6 12 L15.8 11.3 L17.2 6.9 L13.2 7.4 Z" fill="#17a03c"/>
</svg><div class="lg1">圃晶</div><div class="lg2">PUJING</div></div>
    <div class="big" style="left:119px;margin-top:2.1px"><span class="one">1</span>位</div>
  </div>
  <div class="card card2" style="left:426px">
    <div class="logo" style="left:5.1px;top:3.7px;transform:scale(0.7329,0.6269)">
<svg class="abs" style="left:0;top:0" width="24" height="26" viewBox="0 0 24 26">
<path d="M1.2 14 L12.3 2.6 M9.5 17.8 L20.8 14.3 M5.5 9.5 L16 21" stroke="#b9cdf0" stroke-width="0.45" fill="none"/>
<circle cx="1.2" cy="14" r="0.8" fill="#b9cdf0"/><circle cx="12.3" cy="2.6" r="0.8" fill="#b9cdf0"/><circle cx="20.8" cy="14.3" r="0.8" fill="#b9cdf0"/><circle cx="6.8" cy="8.2" r="0.7" fill="#b9cdf0"/>
<path d="M8.6 9.6 C5.4 13.4 3.4 19.5 3.8 24.4 C8.2 25.4 13.4 24 17.6 21.8 L16.6 19.4 C13.2 21.2 9.8 21.9 7.3 21.4 C7.2 17.6 8.6 13.4 10.8 10.4 Z" fill="#d5101c"/>
<path d="M12.3 7.6 L14 7.8 L13.1 20.6 L11.3 20.2 Z" fill="#f0da00"/>
<path d="M12.8 5.4 L19.6 4.6 L17.6 12 L15.8 11.3 L17.2 6.9 L13.2 7.4 Z" fill="#17a03c"/>
</svg><div class="lg1">圃晶</div><div class="lg2">PUJING</div></div>
    <div class="big" style="left:121.8px;margin-top:2.1px"><span class="one">1</span>位</div>
  </div>
  <div class="card card2" style="left:608px">
    <div class="logo" style="left:5.1px;top:3.7px;transform:scale(0.7329,0.6269)">
<svg class="abs" style="left:0;top:0" width="24" height="26" viewBox="0 0 24 26">
<path d="M1.2 14 L12.3 2.6 M9.5 17.8 L20.8 14.3 M5.5 9.5 L16 21" stroke="#b9cdf0" stroke-width="0.45" fill="none"/>
<circle cx="1.2" cy="14" r="0.8" fill="#b9cdf0"/><circle cx="12.3" cy="2.6" r="0.8" fill="#b9cdf0"/><circle cx="20.8" cy="14.3" r="0.8" fill="#b9cdf0"/><circle cx="6.8" cy="8.2" r="0.7" fill="#b9cdf0"/>
<path d="M8.6 9.6 C5.4 13.4 3.4 19.5 3.8 24.4 C8.2 25.4 13.4 24 17.6 21.8 L16.6 19.4 C13.2 21.2 9.8 21.9 7.3 21.4 C7.2 17.6 8.6 13.4 10.8 10.4 Z" fill="#d5101c"/>
<path d="M12.3 7.6 L14 7.8 L13.1 20.6 L11.3 20.2 Z" fill="#f0da00"/>
<path d="M12.8 5.4 L19.6 4.6 L17.6 12 L15.8 11.3 L17.2 6.9 L13.2 7.4 Z" fill="#17a03c"/>
</svg><div class="lg1">圃晶</div><div class="lg2">PUJING</div></div>
    <div class="big" style="left:121.5px;margin-top:2.1px"><span class="one">1</span>位</div>
  </div>
  <div class="card card2" style="left:790px">
    <div class="logo" style="left:5.1px;top:3.7px;transform:scale(0.7329,0.6269)">
<svg class="abs" style="left:0;top:0" width="24" height="26" viewBox="0 0 24 26">
<path d="M1.2 14 L12.3 2.6 M9.5 17.8 L20.8 14.3 M5.5 9.5 L16 21" stroke="#b9cdf0" stroke-width="0.45" fill="none"/>
<circle cx="1.2" cy="14" r="0.8" fill="#b9cdf0"/><circle cx="12.3" cy="2.6" r="0.8" fill="#b9cdf0"/><circle cx="20.8" cy="14.3" r="0.8" fill="#b9cdf0"/><circle cx="6.8" cy="8.2" r="0.7" fill="#b9cdf0"/>
<path d="M8.6 9.6 C5.4 13.4 3.4 19.5 3.8 24.4 C8.2 25.4 13.4 24 17.6 21.8 L16.6 19.4 C13.2 21.2 9.8 21.9 7.3 21.4 C7.2 17.6 8.6 13.4 10.8 10.4 Z" fill="#d5101c"/>
<path d="M12.3 7.6 L14 7.8 L13.1 20.6 L11.3 20.2 Z" fill="#f0da00"/>
<path d="M12.8 5.4 L19.6 4.6 L17.6 12 L15.8 11.3 L17.2 6.9 L13.2 7.4 Z" fill="#17a03c"/>
</svg><div class="lg1">圃晶</div><div class="lg2">PUJING</div></div>
    <div class="big" style="left:122px;margin-top:2.1px"><span class="one">1</span>位</div>
  </div>
<!--/CARDS-->
</div>
</body>
</html>
